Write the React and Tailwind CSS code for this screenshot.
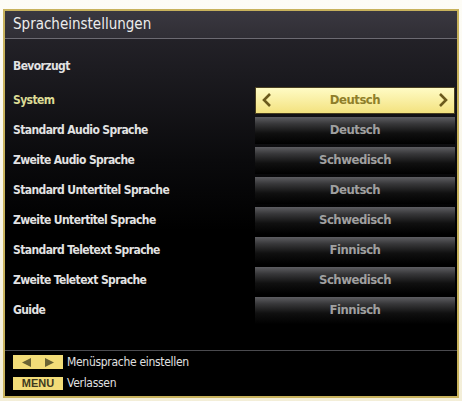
import React from 'react'

const rows = [
  { label: 'System', value: 'Deutsch', active: true },
  { label: 'Standard Audio Sprache', value: 'Deutsch' },
  { label: 'Zweite Audio Sprache', value: 'Schwedisch' },
  { label: 'Standard Untertitel Sprache', value: 'Deutsch' },
  { label: 'Zweite Untertitel Sprache', value: 'Schwedisch' },
  { label: 'Standard Teletext Sprache', value: 'Finnisch' },
  { label: 'Zweite Teletext Sprache', value: 'Schwedisch' },
  { label: 'Guide', value: 'Finnisch' },
]

const font = { fontFamily: '"DejaVu Sans Condensed", "Liberation Sans Narrow", "Liberation Sans", sans-serif' }

const Chevron = ({ dir }) => (
  <svg width="10" height="14" viewBox="0 0 10 14">
    <polyline
      points={dir === 'left' ? '8,1 2,7 8,13' : '2,1 8,7 2,13'}
      fill="none"
      stroke="#6b5a1c"
      strokeWidth="2.6"
    />
  </svg>
)

const ValueBar = ({ value, active }) =>
  active ? (
    <div className="w-[200px] h-[27px] flex items-center justify-between px-[6px] border border-[#4a4020] bg-gradient-to-b from-[#fffbc4] to-[#f3e27e]">
      <Chevron dir="left" />
      <span className="text-[13px] font-bold tracking-[-0.5px] text-[#8f7e2a]">{value}</span>
      <Chevron dir="right" />
    </div>
  ) : (
    <div className="w-[200px] h-[27px] flex items-center justify-center bg-[linear-gradient(to_bottom,#5e5e62_0%,#38383a_25%,#101010_60%,#000_100%)]">
      <span className="text-[13px] font-bold tracking-[-0.5px] text-[#a0a0a0]">{value}</span>
    </div>
  )

const FooterKey = ({ children, h }) => (
  <div className={`w-[50px] ${h} bg-[#f2dc78] flex items-center justify-center`}>{children}</div>
)

export default function App() {
  return (
    <div className="w-[462px] h-[401px] bg-[linear-gradient(to_bottom,#fdfcf6,#f3eed8)] pt-[9px] px-[3px] pb-[3px]" style={font}>
      <div className="h-full flex flex-col border-2 border-[#c8b25c] bg-[linear-gradient(to_bottom,#29272e_0px,#1c1b20_60px,#0a0a0c_150px,#000_220px)]">
        {/* Header */}
        <div className="h-[27px] flex items-center pl-[8px] bg-[linear-gradient(to_bottom,#3a3840,#302e35)]">
          <span className="text-[15px] text-[#ececec]">Spracheinstellungen</span>
        </div>
        <div className="h-px bg-[#6c6a72]" />

        <div className="pt-[12px] pl-[8px] pr-[2px]">
          <div className="h-[30px] mb-[4px] flex items-center">
            <span className="text-[12px] font-bold tracking-[-0.6px] text-[#e2e2e2]">Bevorzugt</span>
          </div>
          {rows.map((r) => (
            <div key={r.label} className="h-[30px] flex items-center justify-between">
              <span className={`text-[12px] font-bold tracking-[-0.6px] ${r.active ? 'text-[#dcdc96]' : 'text-[#e2e2e2]'}`}>{r.label}</span>
              <ValueBar value={r.value} active={r.active} />
            </div>
          ))}
        </div>

        <div className="flex-1" />
        <div className="h-px bg-[#4a4a4e]" />

        {/* Footer */}
        <div className="h-[45px] pl-[8px] pt-[2px] flex flex-col gap-[3px]">
          <div className="flex items-center gap-[4px]">
            <FooterKey h="h-[14px]">
              <div className="flex items-center gap-[14px]">
                <svg width="9" height="9" viewBox="0 0 9 9"><polygon points="9,0 0,4.5 9,9" fill="#6a6334" /></svg>
                <svg width="9" height="9" viewBox="0 0 9 9"><polygon points="0,0 9,4.5 0,9" fill="#6a6334" /></svg>
              </div>
            </FooterKey>
            <span className="text-[12px] tracking-[-0.3px] text-[#e0e0e0]">Menüsprache einstellen</span>
          </div>
          <div className="flex items-center gap-[4px]">
            <FooterKey h="h-[13px]">
              <span className="text-[11px] font-bold text-[#3e3a20] leading-none" style={{ fontFamily: '"Liberation Sans", sans-serif' }}>MENU</span>
            </FooterKey>
            <span className="text-[12px] tracking-[-0.3px] text-[#e0e0e0]">Verlassen</span>
          </div>
        </div>
      </div>
    </div>
  )
}
